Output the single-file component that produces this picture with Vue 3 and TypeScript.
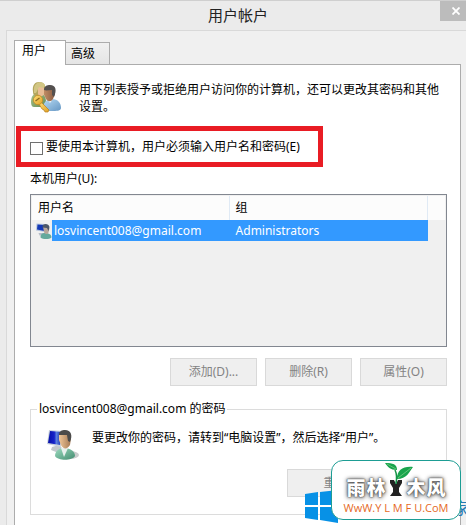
<script setup lang="ts">
import { ref } from 'vue'

interface Account {
  name: string
  group: string
}

const requirePassword = ref(false)
const accounts: Account[] = [{ name: 'losvincent008@gmail.com', group: 'Administrators' }]
const actions: string[] = ['添加(D)...', '删除(R)', '属性(O)']
</script>

<template>
  <div class="window">
    <header class="titlebar">
      <h1>用户帐户</h1>
      <button class="close" type="button" aria-label="关闭">
        <svg width="8" height="8" viewBox="0 0 8 8"><path d="M.5.5l7 7M7.500.5l-7 7" stroke="#fff" stroke-width="1.800" /></svg>
      </button>
    </header>

    <main class="body">
      <nav class="tabs" role="tablist">
        <button class="tab active" type="button" role="tab" aria-selected="true">用户</button>
        <button class="tab" type="button" role="tab" aria-selected="false">高级</button>
      </nav>

      <section class="panel">
        <div class="intro">
          <svg class="keys" width="32" height="32" viewBox="0 0 32 32">
            <defs>
              <linearGradient id="blue" x1="0" y1="0" x2="1" y2="1"><stop stop-color="#b9dcf4" /><stop offset="1" stop-color="#6697c4" /></linearGradient>
              <linearGradient id="moss" x1="0" y1="0" x2="1" y2="1"><stop stop-color="#a9c68b" /><stop offset="1" stop-color="#668a56" /></linearGradient>
              <linearGradient id="gold" x1="0" y1="0" x2="1" y2="1"><stop stop-color="#ffe07a" /><stop offset="1" stop-color="#e0a024" /></linearGradient>
              <linearGradient id="tan"><stop stop-color="#c08c64" /><stop offset="1" stop-color="#8a5c42" /></linearGradient>
            </defs>
            <path d="M1 21c0-6 3-9 7-9 5 0 8 3 8 9l-3 5H4c-2 0-3-2-3-5z" fill="url(#moss)" />
            <path d="M3 11C2 4 5 1 9 1c5 0 7 3 6 8l-2 6H6c-2 0-3-2-3-4z" fill="#b3a65e" />
            <path d="M8 6l6 0v6c0 4-5 4-6 1z" fill="#e9bd96" />
            <path d="M4 8C4 1 12-1 15 4l-1 3-5-1-3 6-2 0z" fill="#d2c684" />
            <path d="M13 28c0-6 3-10 9-10 6 0 9 4 9 9 0 3-5 3-9 3-5 0-9 0-9-2z" fill="url(#blue)" />
            <path d="M17 18h6l-3 4z" fill="#edf4fa" />
            <path d="M14 9l9-1 2 5-2 5c-2 3-5 3-7 0l-2-4z" fill="url(#tan)" />
            <path d="M14 9c0-4 3-5 6-5 6 0 7 5 4 12l-2-2 0-5c-3 0-6 1-8 0z" fill="#54504f" />
            <path d="M11 21l8 8-1 2h-3l-1-2-2-1-3-5z" fill="url(#gold)" stroke="#b9801c" stroke-width=".7" />
            <circle cx="8" cy="19" r="4.700" fill="url(#gold)" stroke="#c08a22" stroke-width=".8" />
            <path d="M5.500 20l4-3" stroke="#8b681f" stroke-width="1.300" />
          </svg>
          <p>用下列表授予或拒绝用户访问你的计算机，还可以更改其密码和其他设置。</p>
        </div>

        <div class="highlight">
          <input id="require" v-model="requirePassword" type="checkbox" />
          <label for="require">要使用本计算机，用户必须输入用户名和密码(E)</label>
        </div>

        <h2 id="list-title">本机用户(U):</h2>
        <div class="list">
          <table aria-labelledby="list-title">
            <colgroup><col class="c-icon" /><col class="c-name" /><col class="c-group" /><col class="c-end" /></colgroup>
            <thead>
              <tr><th colspan="2">用户名</th><th>组</th><th class="end"></th></tr>
            </thead>
            <tbody>
              <tr v-for="a in accounts" :key="a.name">
                <td class="icon">
                  <svg width="16" height="16" viewBox="0 0 32 32">
                    <path d="M1 1l17 1v16L0 15z" fill="#b5c4dd" />
                    <path d="M3 3l14 1v12L2 13z" fill="#1238b6" />
                    <path d="M5 20h13l2 5H7z" fill="#b5bcc8" />
                    <path d="M9 29c0-7 4-9 9-9 8 0 13 3 13 9-5 4-17 4-22 0z" fill="#65a99c" />
                    <path d="M14 7h9l4 4-2 8c-3 5-8 3-9-1z" fill="#b8a69a" />
                    <path d="M13 7c1-7 13-6 14 1l-2 8-3-6-9-1z" fill="#4a5568" />
                  </svg>
                </td>
                <td class="selected name">{{ a.name }}</td>
                <td class="selected group">{{ a.group }}</td>
                <td></td>
              </tr>
            </tbody>
          </table>
        </div>

        <div class="actions">
          <button v-for="t in actions" :key="t" type="button" disabled>{{ t }}</button>
        </div>

        <fieldset>
          <legend>losvincent008@gmail.com 的密码</legend>
          <div class="hint">
            <svg width="32" height="32" viewBox="0 0 32 32">
              <defs>
                <linearGradient id="screen"><stop stop-color="#0710a8" /><stop offset=".45" stop-color="#1623c9" /><stop offset=".6" stop-color="#5b80df" /><stop offset="1" stop-color="#0d25a8" /></linearGradient>
                <linearGradient id="skin"><stop stop-color="#efc698" /><stop offset="1" stop-color="#a57954" /></linearGradient>
                <linearGradient id="shirt" x1="0" y1="0" x2="1" y2="1"><stop stop-color="#9ddcc0" /><stop offset="1" stop-color="#438c70" /></linearGradient>
              </defs>
              <ellipse cx="23" cy="26" rx="9" ry="4" fill="#c9cccc" />
              <path d="M5 18l7-2 4 4-7 3-5-2z" fill="#c2c8cc" />
              <path d="M2 1l14 1-2 16L0 15z" fill="#c8d1dc" />
              <path d="M3 2l12 1-2 13L1 14z" fill="url(#screen)" />
              <path d="M8 27c0-5 4-8 9-8 7 0 11 4 11 8-3 5-17 5-20 0z" fill="url(#shirt)" />
              <path d="M14 19h7l-4 9z" fill="#e8f0ee" />
              <path d="M12 6l9-2 3 5-1 7c-3 5-7 4-9 0l-2-5z" fill="url(#skin)" />
              <path d="M12 6c0-4 3-5 6-5 6 0 8 5 5 12l-2-1-1-6c-3 0-5 0-8 0z" fill="#4c4b4a" />
            </svg>
            <p>要更改你的密码，请转到“电脑设置”，然后选择“用户”。</p>
          </div>
          <div class="reset"><button type="button" disabled>重置密码(P)...</button></div>
        </fieldset>
      </section>
    </main>

    <div class="watermark">
      <svg class="flag" width="33" height="33" viewBox="0 0 33 33">
        <path d="M0 4l13-2v13H0zM15 2l18-2v15H15zM0 17h13v13L0 28zM15 17h18v16l-18-3z" fill="#0791e6" />
      </svg>
      <span class="site">家</span>
      <div class="badge">
        <div class="brand">
          <span>雨</span><span>林</span>
          <svg width="30" height="36" viewBox="0 0 30 36">
            <path d="M6 18h4l2 4 2-4h4v3l-3 5v4l3 4H6l3-4v-4l-3-5z" fill="#222" />
            <path d="M12 22c1-6 1-10-1-14M12 21c0-4 2-7 4-9" fill="none" stroke="#159447" stroke-width="1.500" />
            <path d="M1 1c8 0 12 1 12 7-7 0-9-3-12-7z" fill="#19a44d" />
            <path d="M13 17C13 8 19 4 29 5c-4 5-6 12-16 12z" fill="#19a44d" />
            <path d="M3 2l9 5M14 16L27 6" stroke="#73cd83" stroke-width=".8" />
          </svg>
          <span>木</span><span>风</span>
        </div>
        <div class="url">WwW.Y L M F U.CoM</div>
      </div>
    </div>
  </div>
</template>

<style>
body {
  margin: 0;
}
</style>

<style scoped>
* {
  box-sizing: border-box;
}
.window {
  position: relative;
  display: flex;
  flex-direction: column;
  min-height: 100vh;
  overflow: hidden;
  border-top: 1px solid #cfcfcf;
  background: #ebebeb;
  color: #000;
  font: 12px/18px "Noto Sans", "Noto Sans CJK SC", sans-serif;
}
h1, h2, p {
  margin: 0;
  font-weight: 400;
}
button {
  font: inherit;
}
.titlebar {
  display: flex;
  align-items: flex-start;
  height: 29px;
  padding-left: 34px;
}
h1 {
  flex: 1;
  padding-top: 4px;
  padding-left: 2px;
  text-align: center;
  font-size: 15px;
  line-height: 20px;
  color: #222;
}
.close {
  display: flex;
  align-items: center;
  justify-content: center;
  width: 26px;
  height: 20px;
  padding: 0 0 0 6px;
  border: 0;
  background: #bcbcbc;
}
.close svg {
  flex: none;
}
.body {
  flex: 1;
  display: flex;
  flex-direction: column;
  margin-left: 6px;
  padding: 9px 5px 0 7px;
  border: solid #d9d9d9;
  border-width: 1px 0 0 1px;
  background: #f0f0f0;
}
.tabs {
  display: flex;
  align-items: flex-end;
}
.tab {
  height: 22px;
  width: 44px;
  padding: 0 0 0 5px;
  text-align: left;
  border: 1px solid #acacac;
  border-width: 1px 1px 0 0;
  background: linear-gradient(#f0f0f0, #e5e5e5);
  color: #000;
}
.tab.active {
  z-index: 1;
  height: 25px;
  width: 52px;
  margin-bottom: -1px;
  padding: 0 0 4px 7px;
  border-width: 1px 1px 0 1px;
  background: #fff;
}
.panel {
  flex: 1;
  padding: 16px 13px 10px 15px;
  border: 1px solid #acacac;
  border-bottom: 0;
  background: #fff;
}
.intro {
  display: flex;
  gap: 17px;
}
.intro svg {
  flex: none;
}
.intro p {
  line-height: 17px;
}
.highlight {
  display: flex;
  align-items: center;
  gap: 3px;
  width: fit-content;
  height: 41px;
  margin: 11px 0 0 -14px;
  padding: 0 18px 0 9px;
  border: 5px solid #e91c24;
}
.highlight input {
  appearance: none;
  width: 13px;
  height: 13px;
  margin: 3px 0 0;
  border: 1px solid #707070;
  background: #fff;
}
h2 {
  padding: 3px 0 6px;
  font-size: 12px;
  line-height: 18px;
}
.list {
  height: 153px;
  padding: 1px;
  border: 1px solid #828790;
  background: #f0f0f0;
}
table {
  width: 100%;
  table-layout: fixed;
  border-collapse: separate;
  border-spacing: 0;
}
.c-icon { width: 20px; }
.c-name { width: 43%; }
.c-group { width: auto; }
.c-end { width: 17px; }
th, td {
  padding: 0;
  text-align: left;
  font-weight: 400;
}
th {
  height: 24px;
  padding-left: 6px;
  border-right: 1px solid #e0eaf5;
  background: #fcfcfc;
}
th.end {
  border: 0;
}
td {
  height: 21px;
}
.icon {
  padding-left: 4px;
}
.icon svg {
  display: block;
}
.selected {
  background: #3399ff;
  color: #fff;
}
.name {
  padding-left: 2px;
}
.group {
  padding-left: 6px;
}
.actions {
  display: flex;
  justify-content: flex-end;
  gap: 8px;
  margin-top: 11px;
}
button:disabled {
  width: 87px;
  height: 28px;
  padding: 0;
  border: 1px solid #d9d9d9;
  background: #efefef;
  color: #838383;
}
fieldset {
  min-width: 0;
  margin: 14px 0 0;
  padding: 0 14px 17px 16px;
  border: 1px solid #dcdcdc;
}
legend {
  margin-left: -10px;
  padding: 0 2px;
}
.hint {
  display: flex;
  gap: 13px;
  padding-top: 11px;
}
.reset {
  display: flex;
  justify-content: flex-end;
  margin-top: 8px;
}
.reset button {
  width: 145px;
}
.watermark {
  position: absolute;
  right: 0;
  bottom: 0;
  width: 161px;
  height: 66px;
}
.flag {
  position: absolute;
  left: 0;
  bottom: 2px;
}
.site {
  position: absolute;
  right: -3px;
  bottom: 8px;
  color: #2479b5;
  font-size: 16px;
}
.badge {
  position: absolute;
  right: 5px;
  bottom: 5px;
  width: 130px;
  height: 60px;
  border: 1px solid #1d9d94;
  border-radius: 12px;
  background: #fff;
}
.brand {
  display: flex;
  align-items: flex-end;
  justify-content: center;
  gap: 1px;
  height: 39px;
}
.brand span {
  color: #fff;
  font: 900 19px/26px "Noto Sans CJK SC", sans-serif;
  text-shadow: 0 0 1px #333, 0 0 2px #555, 0 0 4px #777, 0 1px 5px #888;
}
.brand svg {
  position: relative;
  flex: none;
  margin: 0 -8px 2px -3px;
}
.url {
  text-align: center;
  color: #e5691e;
  font: 11px/16px "Open Sans", sans-serif;
  white-space: nowrap;
}
</style>
